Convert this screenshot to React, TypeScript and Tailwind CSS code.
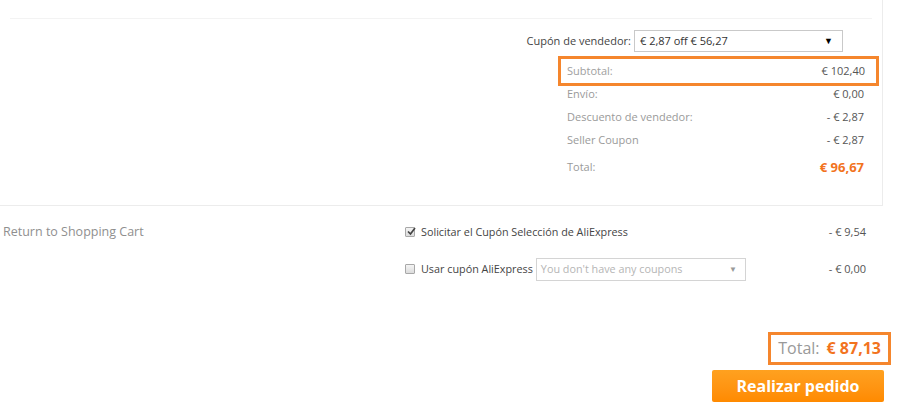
const ROWS = [
  { label: 'Envío:', value: '€ 0,00' },
  { label: 'Descuento de vendedor:', value: '- € 2,87' },
  { label: 'Seller Coupon', value: '- € 2,87' },
]

function Check({ checked }: { checked?: boolean }) {
  return (
    <span className="relative inline-flex h-[10px] w-[10px] shrink-0 items-center justify-center rounded-[1px] border border-[#a8a8a8] bg-gradient-to-b from-[#f4f4f4] to-[#dcdcdc]">
      {checked && (
        <svg width="9" height="9" viewBox="0 0 9 9" className="absolute -top-[1px] left-[1px]">
          <path d="M1 4.5 L3.5 7 L8 1" fill="none" stroke="#444" strokeWidth="1.7" />
        </svg>
      )}
    </span>
  )
}

export default function App() {
  return (
    <div className="h-[414px] w-[904px] overflow-hidden bg-white font-['Open_Sans',sans-serif] text-[#666]">
      <div className="h-[206px] w-[883px] border-b border-r border-[#ececec]">
        <div className="mx-[10px] h-[19px] border-b border-[#f3f3f3]" />

        <div className="flex items-center justify-end pr-[39px] pt-[11px]">
          <span className="mr-[3px] text-[11px] text-[#444]">Cupón de vendedor:</span>
          <div className="flex h-[22px] w-[209px] items-center justify-between border border-[#c9c9c9] pl-[5px] pr-[9px] text-[11px] text-[#333]">
            <span>€ 2,87 off € 56,27</span>
            <span className="text-[9px] text-black">▼</span>
          </div>
        </div>

        <div className="ml-[558px] mt-[4px] w-[321px]">
          <div className="flex h-[30px] items-center justify-between border-[3px] border-[#f5862d] pl-[6px] pr-[11px] text-[11px]">
            <span className="text-[#a0a0a0]">Subtotal:</span>
            <span className="text-[#555]">€ 102,40</span>
          </div>
          <div className="-mt-[3px]">
            {ROWS.map((r) => (
              <div key={r.label} className="flex h-[23px] items-center justify-between pl-[9px] pr-[15px] text-[11px]">
                <span className="text-[#9a9a9a]">{r.label}</span>
                <span className="text-[#555]">{r.value}</span>
              </div>
            ))}
            <div className="mt-[3px] flex h-[25px] items-center justify-between pl-[9px] pr-[15px]">
              <span className="text-[11px] text-[#9a9a9a]">Total:</span>
              <span className="text-[13px] font-bold text-[#f2731e]">€ 96,67</span>
            </div>
          </div>
        </div>
      </div>

      <div className="flex items-center pt-[17px]">
        <div className="w-[405px] pl-[3px] text-[12.5px] text-[#8f8f8f]">Return to Shopping Cart</div>
        <div className="flex flex-1 items-center gap-[6px] text-[10.8px] text-[#444]">
          <Check checked />
          <span>Solicitar el Cupón Selección de AliExpress</span>
        </div>
        <div className="pr-[38px] text-[11px] text-[#555]">- € 9,54</div>
      </div>

      <div className="mt-[16px] flex items-center">
        <div className="w-[405px]" />
        <div className="flex flex-1 items-center text-[10.8px] text-[#444]">
          <Check />
          <span className="ml-[6px] mr-[3px]">Usar cupón AliExpress</span>
          <div className="flex h-[23px] w-[210px] items-center justify-between border border-[#d4d4d4] pl-[4px] pr-[8px] text-[#b5b5b5]">
            <span>You don't have any coupons</span>
            <span className="text-[8px] text-[#999]">▼</span>
          </div>
        </div>
        <div className="pr-[38px] text-[11px] text-[#555]">- € 0,00</div>
      </div>

      <div className="mt-[51px] flex justify-end pr-[13px]">
        <div className="flex h-[33px] items-center gap-[7px] border-[3px] border-[#f5862d] px-[7px]">
          <span className="text-[16px] text-[#999]">Total:</span>
          <span className="text-[16px] font-bold text-[#f2731e]">€ 87,13</span>
        </div>
      </div>
      <div className="mt-[5px] flex justify-end pr-[20px]">
        <button className="h-[32px] w-[172px] rounded-[2px] bg-gradient-to-b from-[#ffa11f] to-[#ff8a00] text-[16px] font-bold text-white">
          Realizar pedido
        </button>
      </div>
    </div>
  )
}
